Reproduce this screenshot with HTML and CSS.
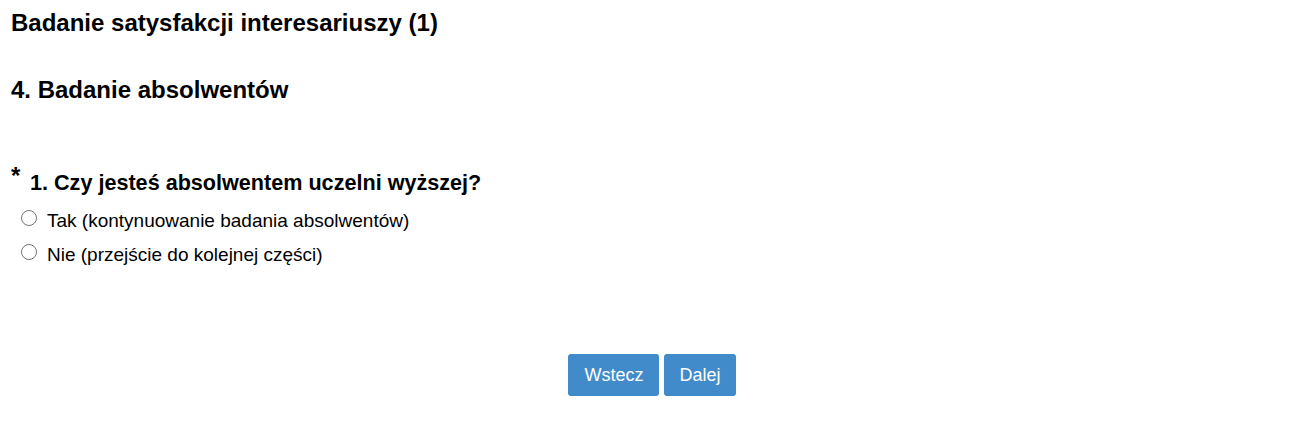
FILE: index.html
```html
<!DOCTYPE html>
<html lang="pl">
<head>
<meta charset="utf-8">
<link rel="stylesheet" href="styles.css">
</head>
<body>
<div class="page">
  <h1 class="title">Badanie satysfakcji interesariuszy (1)</h1>
  <h2 class="section">4. Badanie absolwentów</h2>
  <div class="question">
    <div class="q-head"><span class="req">*</span><span class="q-text">1. Czy jesteś absolwentem uczelni wyższej?</span></div>
    <label class="opt"><input type="radio" name="q1"><span>Tak (kontynuowanie badania absolwentów)</span></label>
    <label class="opt"><input type="radio" name="q1"><span>Nie (przejście do kolejnej części)</span></label>
  </div>
  <div class="nav">
    <button class="btn">Wstecz</button>
    <button class="btn">Dalej</button>
  </div>
</div>
</body>
</html>
```
FILE: styles.css
```css
html, body { margin: 0; padding: 0; background: #fff; }
body { font-family: "Liberation Sans", Arial, sans-serif; color: #000; }
.page { padding: 0 11px; }
.title { font-size: 24px; font-weight: bold; margin: 0; padding-top: 9px; line-height: 28px; }
.section { font-size: 24px; font-weight: bold; margin: 39px 0 0; line-height: 28px; }
.question { margin-top: 66px; }
.q-head { display: flex; align-items: flex-start; margin-bottom: 8px; }
.req { font-size: 24px; font-weight: bold; line-height: 24px; width: 19px; margin-top: -6px; }
.q-text { font-size: 21.6px; font-weight: bold; line-height: 26px; }
.opt { display: flex; align-items: flex-start; font-size: 19px; line-height: 34px; height: 34px; padding-left: 10px; }
.opt input { margin: 6px 10px 0 0; width: 16px; height: 16px; }
.nav { display: flex; justify-content: center; gap: 5px; margin-top: 82px; padding-right: 6px; }
.btn { background: #428bca; color: #fff; border: none; border-radius: 3px; font-family: "Liberation Sans", Arial, sans-serif; font-size: 18px; padding: 11px 16px; line-height: 20px; }
.btn + .btn { padding: 11px 15px; }
```
